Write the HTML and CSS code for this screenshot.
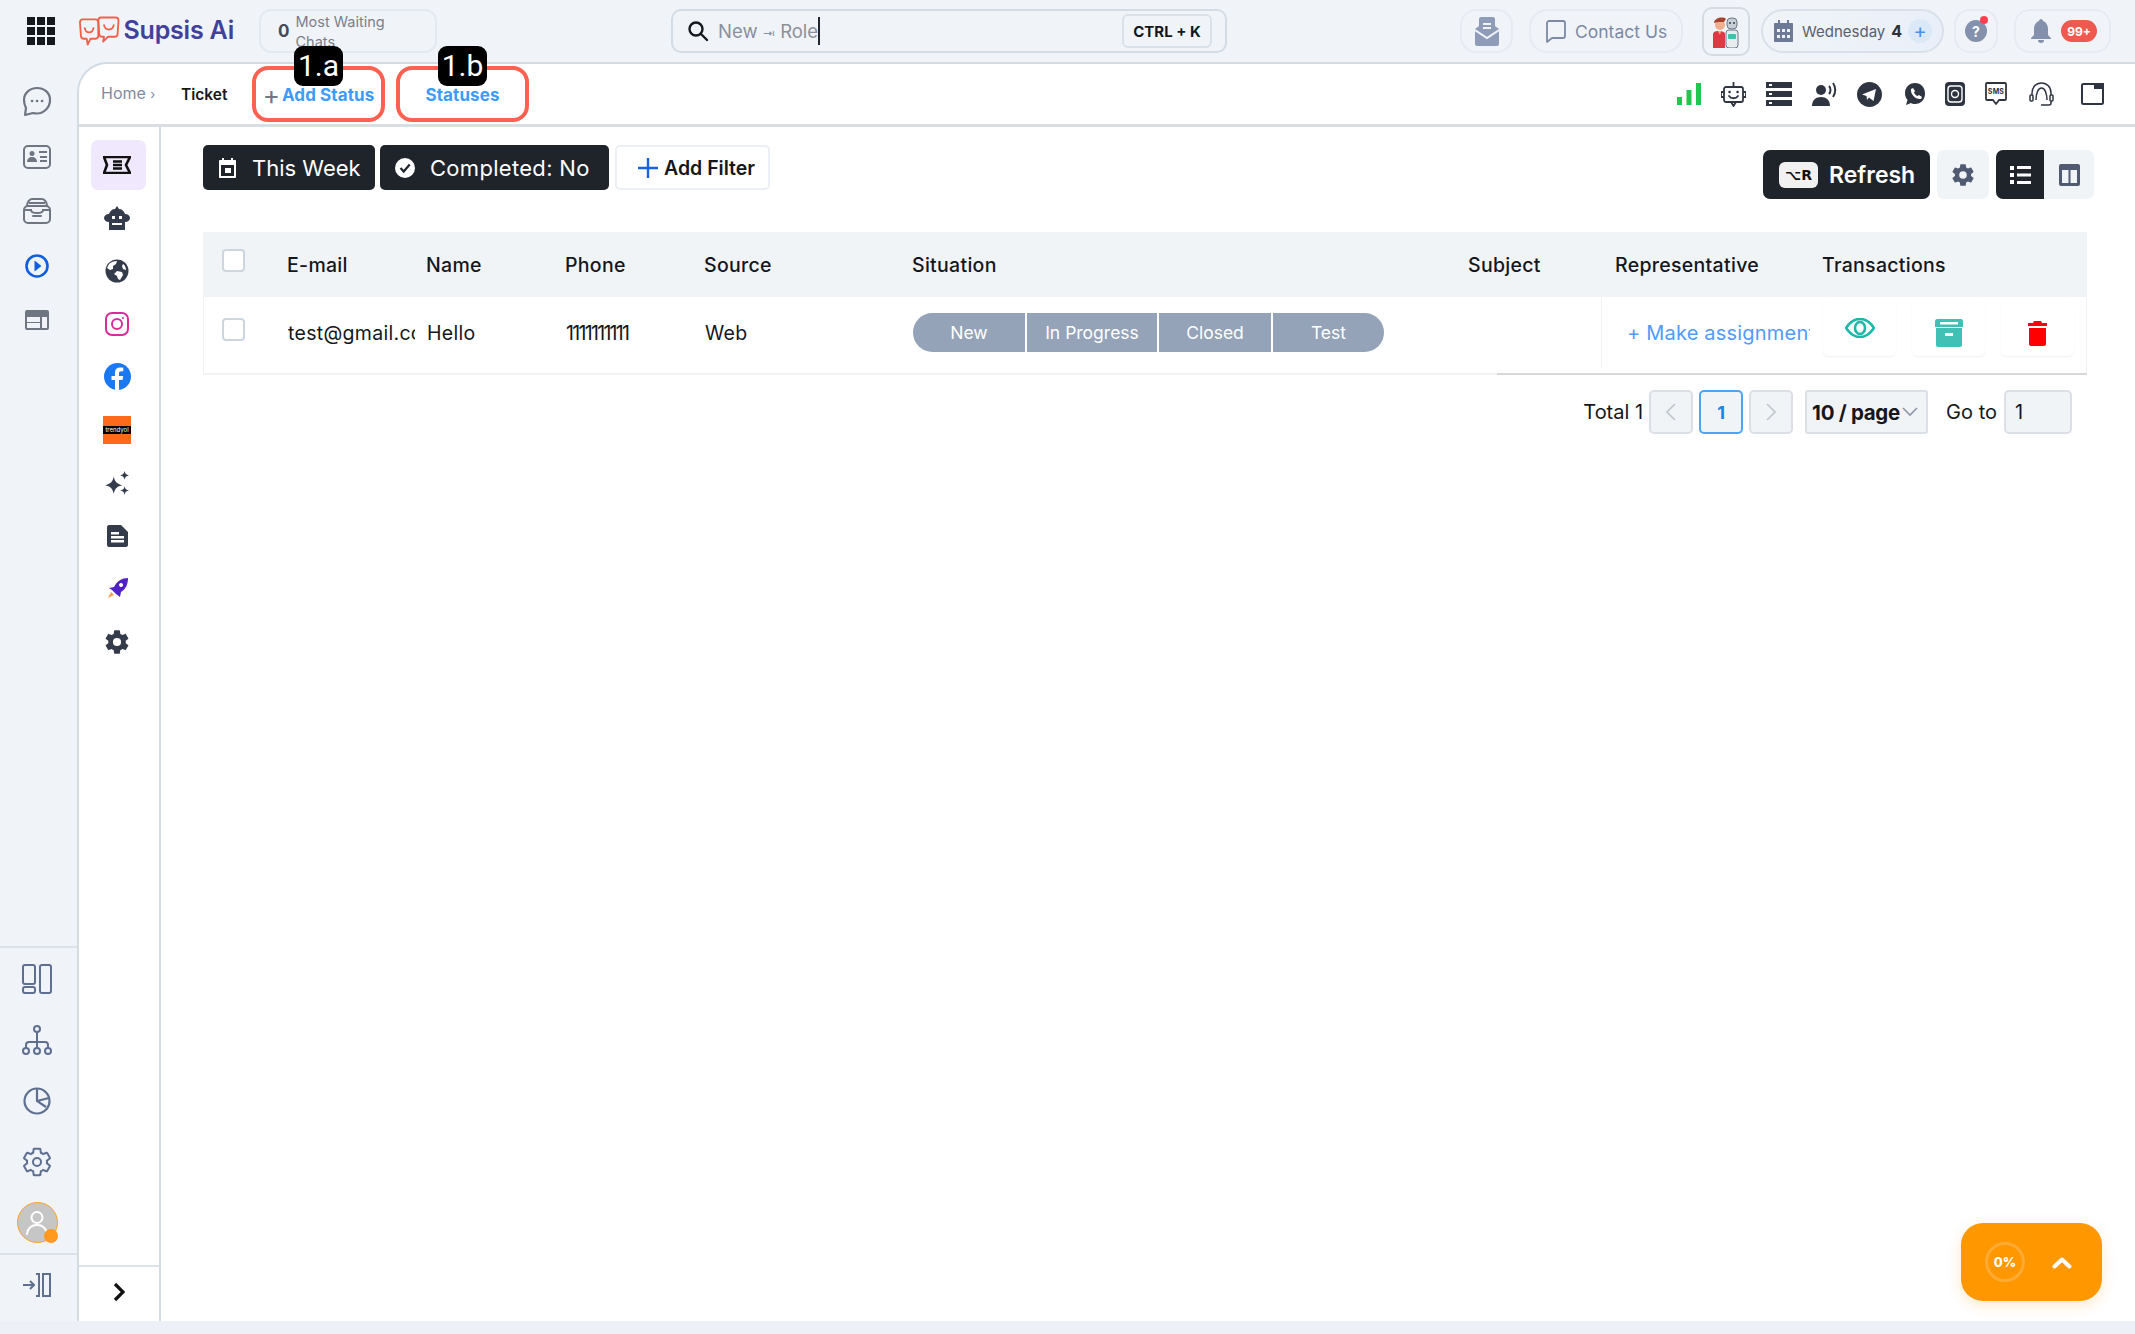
FILE: index.html
```html
<!DOCTYPE html>
<html lang="en">
<head>
<meta charset="utf-8">
<title>Supsis Ai - Ticket</title>
<link rel="stylesheet" href="styles.css">
</head>
<body>
<header class="topbar">
  <div class="apps"><i></i><i></i><i></i><i></i><i></i><i></i><i></i><i></i><i></i></div>
  <div class="logo">
    <svg width="42" height="30" viewBox="0 0 42 30" fill="none" stroke="#f0604a" stroke-width="1.900" stroke-linecap="round" stroke-linejoin="round"><path d="M4 3h13c2 0 3 1 3 3v14c0 2-1 3-3 3h-5l-3 6-1-6H5c-2 0-3-1-3-3L1 6c0-2 1-3 3-3z"/><path d="M23 1h15c2 0 3 1 3 3l-1 14c0 2-1 3-3 3h-7l-5 5 1-5h-2c-2 0-3-1-3-3L20 4c0-2 1-3 3-3z"/><path d="M6 12c1 6 8 6 9 0M26 9c1 6 9 6 10 0"/></svg>
    <span class="logo-name">Supsis Ai</span>
  </div>
  <div class="waiting"><b>0</b><span>Most Waiting Chats</span></div>
  <div class="search">
    <svg width="22" height="22" viewBox="0 0 22 22" fill="none" stroke="#15181d" stroke-width="2.400" stroke-linecap="round"><circle cx="9" cy="9" r="6.500"/><path d="M14 14l6 6"/></svg>
    <span class="search-text">New <small>⇥</small> Role</span><span class="caret"></span>
    <kbd class="shortcut">CTRL + K</kbd>
  </div>
  <div class="tbtn mailbtn">
    <svg width="24" height="29" viewBox="0 0 24 29"><path fill="#8e9cb7" d="M6 0h12c1 0 2 1 2 2v7l4 3v15c0 1-1 2-2 2H2c-1 0-2-1-2-2V12l4-3V2c0-1 1-2 2-2z"/><path fill="none" stroke="#f0f4f8" stroke-width="2" d="M0 13l12 8 12-8M8 7h8M8 11h8"/></svg>
  </div>
  <div class="tbtn contact">
    <svg width="20" height="23" viewBox="0 0 20 23" fill="none" stroke="#7c8aa5" stroke-width="1.800" stroke-linejoin="round"><path d="M1 3c0-1 1-2 2-2h14c1 0 2 1 2 2v13c0 1-1 2-2 2H6l-5 4z"/></svg>
    <span>Contact Us</span>
  </div>
  <div class="tbtn robotbtn">
    <svg width="26" height="34" viewBox="0 0 26 34"><circle cx="7" cy="11" r="5" fill="#eeb08e"/><path fill="#a5432f" d="M1 9c0-5 9-7 12-4l-2 3-6 0z"/><path fill="#de3a45" d="M0 20c1-3 3-3 6-3s6 1 6 3v14H0z"/><path fill="#eeb08e" d="M5 17h3l-1 4z"/><rect x="14" y="4" width="10" height="11" rx="4" fill="#c8ced6" stroke="#6b7785"/><circle cx="17" cy="9" r="1" fill="#30404f"/><circle cx="21" cy="9" r="1" fill="#30404f"/><rect x="13" y="16" width="12" height="18" rx="3" fill="#e8ecef" stroke="#6b7785"/><rect x="15" y="20" width="8" height="5" rx="1" fill="#3fc0a8"/></svg>
  </div>
  <div class="tbtn datebtn">
    <svg width="19" height="22" viewBox="0 0 19 22"><path fill="#6c7a96" d="M1 3h3V0h2v3h7V0h2v3h3c.6 0 1 .4 1 1v17c0 .6-.4 1-1 1H1c-.6 0-1-.4-1-1V4c0-.6.4-1 1-1z"/><path fill="#eef2f8" d="M3 9h3v3H3zM8 9h3v3H8zM13 9h3v3h-3zM3 15h3v3H3zM8 15h3v3H8zM13 15h3v3h-3z"/></svg>
    <span class="day">Wednesday</span><b class="daynum">4</b><span class="dayadd">+</span>
  </div>
  <div class="tbtn helpbtn"><span class="help">?</span><i class="dot"></i></div>
  <div class="tbtn bellbtn">
    <svg width="20" height="24" viewBox="0 0 20 24"><path fill="#8391ad" d="M10 0c1 0 2 1 2 2 3 1 5 4 5 8v6l3 3v1H0v-1l3-3v-6c0-4 2-7 5-8 0-1 1-2 2-2zM7 21h6c0 2-1 3-3 3s-3-1-3-3z"/></svg>
    <span class="count">99+</span>
  </div>
</header>

<div class="layout">
  <nav class="rail">
    <div class="rail-group">
      <a class="rail-top"><svg width="30" height="32" viewBox="0 0 30 32" fill="none" stroke="#6f7681" stroke-width="2.200" stroke-linejoin="round"><path d="M15 2C8 2 2 7 2 14c0 4 1 6 2 8l-1 7 8-2c1 .3 3 .5 4 .5 7 0 13-6 13-13.500S22 2 15 2z"/><path stroke-linecap="round" stroke-width="2.600" d="M10 15h.1M15 15h.1M20 15h.1"/></svg></a>
      <a class="rail-top"><svg width="28" height="24" viewBox="0 0 28 24"><rect x="1" y="1" width="26" height="22" rx="4" fill="none" stroke="#6f7681" stroke-width="2"/><circle cx="9" cy="8.500" r="2.500" fill="#6f7681"/><path fill="#6f7681" d="M4 17c0-3 2-5 5-5s5 2 5 5z"/><path stroke="#6f7681" stroke-width="2" d="M16 7h8M17 12h7M17 16h7"/></svg></a>
      <a class="rail-top"><svg width="28" height="26" viewBox="0 0 28 26" fill="none" stroke="#6f7681" stroke-width="2"><rect x="1" y="8" width="26" height="17" rx="4"/><path d="M4 8c0-3 2-7 5-7h10c3 0 5 4 5 7M6 5h16M1 12h7c0 3 3 3 6 3s6 0 6-3h7"/><path stroke-linecap="round" d="M10 18h8"/></svg></a>
      <a class="rail-top"><svg width="24" height="24" viewBox="0 0 24 24"><circle cx="12" cy="12" r="10.500" fill="none" stroke="#0f5ee0" stroke-width="2.600"/><path fill="#0f5ee0" d="M9.500 6.500l7 5.500-7 5.500z"/></svg></a>
      <a class="rail-top"><svg width="24" height="20" viewBox="0 0 24 20"><rect width="24" height="20" rx="2" fill="#6f7681"/><path fill="#f0f4f8" d="M2 7h13v5H2zM2 13h13v5H2zM17 7h5v11h-5z"/></svg></a>
    </div>
    <div class="rail-group rail-lower">
      <a class="rail-bottom"><svg width="30" height="30" viewBox="0 0 30 30" fill="none" stroke="#5f6f90" stroke-width="2"><rect x="1" y="1" width="12" height="19" rx="2"/><rect x="1" y="23" width="12" height="6" rx="2"/><rect x="18" y="1" width="11" height="28" rx="2"/></svg></a>
      <a class="rail-bottom"><svg width="30" height="30" viewBox="0 0 30 30" fill="none" stroke="#5f6f90" stroke-width="2"><circle cx="15" cy="4" r="3"/><circle cx="4" cy="26" r="3"/><circle cx="15" cy="26" r="3"/><circle cx="26" cy="26" r="3"/><path d="M15 7v16M4 23v-3c0-2 1-3 3-3h16c2 0 3 1 3 3v3"/></svg></a>
      <a class="rail-bottom"><svg width="28" height="28" viewBox="0 0 28 28" fill="none" stroke="#5f6f90" stroke-width="2.200"><circle cx="14" cy="14" r="12.500"/><path d="M14 2v12l9 6M14 14l12-3"/></svg></a>
      <a class="rail-bottom"><svg width="32" height="32" viewBox="0 0 24 24" fill="none" stroke="#5f6f90" stroke-width="1.500"><circle cx="12" cy="12" r="3"/><path d="M19.430 12.970c.04-.32.070-.64.070-.97s-.03-.66-.07-1l2.110-1.630c.19-.15.240-.42.120-.64l-2-3.460c-.12-.22-.39-.31-.61-.22l-2.490 1c-.52-.39-1.060-.73-1.690-.98l-.37-2.650A.5.500 0 0 0 14 2h-4a.5.500 0 0 0-.5.420l-.37 2.650c-.63.25-1.170.59-1.690.98l-2.490-1c-.22-.09-.49 0-.61.22l-2 3.460c-.13.22-.07.49.12.64L4.570 11c-.04.34-.07.67-.07 1s.03.65.07.97l-2.110 1.660c-.19.15-.25.42-.12.64l2 3.460c.12.22.39.3.61.22l2.490-1.010c.52.4 1.060.74 1.690.99l.37 2.650c.04.24.25.42.5.42h4c.25 0 .46-.18.5-.42l.37-2.650c.63-.26 1.170-.59 1.690-.99l2.490 1.010c.22.08.49 0 .61-.22l2-3.460c.12-.22.07-.49-.12-.64z"/></svg></a>
      <a class="rail-bottom"><span class="avatar"><svg width="24" height="26" viewBox="0 0 24 26" fill="none" stroke="#fff" stroke-width="2" stroke-linecap="round"><circle cx="12" cy="7.500" r="5.500"/><path d="M2 24c1-6 5-9 10-9s9 3 10 9"/></svg><i></i></span></a>
    </div>
    <a class="rail-exit"><svg width="28" height="24" viewBox="0 0 28 24" fill="none" stroke="#5f6f90" stroke-width="2"><path d="M0 12h10M7 8l4 4-4 4M13 1h3v22h-3M20 1h7v22h-7z"/></svg></a>
  </nav>

  <main class="panel">
    <div class="subbar">
      <span class="crumb">Home <small>›</small></span>
      <span class="crumb-now">Ticket</span>
      <div class="mark mark-a"><span class="tag">1.a</span><span class="link"><em>+</em>Add Status</span></div>
      <div class="mark mark-b"><span class="tag">1.b</span><span class="link">Statuses</span></div>
      <div class="channels">
        <svg width="24" height="22" viewBox="0 0 24 22" fill="#1cc84e"><rect y="14" width="5" height="8"/><rect x="9.500" y="7" width="5" height="15"/><rect x="19" width="5" height="22"/></svg>
        <svg width="25" height="26" viewBox="0 0 25 26" fill="none" stroke="#2f3540" stroke-width="1.800"><rect x="3" y="6" width="19" height="15" rx="2"/><path d="M12.500 1v5M3 11H0v5h3M22 11h3v5h-3M10 21l2.500 4 2.500-4"/><path d="M8 15c2 3 7 3 9 0" stroke-linecap="round"/><path stroke-linecap="round" stroke-width="2.500" d="M8.500 11h.1M16.500 11h.1"/></svg>
        <svg width="26" height="24" viewBox="0 0 26 24"><path fill="#2f3540" d="M0 0h26v6H0zM0 9h26v6H0zM0 18h26v6H0z"/><path fill="#fff" d="M3 2h3v2H3zM3 11h3v2H3zM3 20h3v2H3z"/></svg>
        <svg width="25" height="24" viewBox="0 0 25 24"><circle cx="9" cy="8" r="5" fill="#2f3540"/><path fill="#2f3540" d="M0 24c0-6 4-9 9-9s9 3 9 9z"/><path fill="none" stroke="#2f3540" stroke-width="2" d="M17 4c2 2 2 6 0 8M21 1c3 4 3 10 0 14"/></svg>
        <svg width="25" height="25" viewBox="0 0 25 25"><circle cx="12.500" cy="12.500" r="12.500" fill="#2f3540"/><path fill="#fff" d="M5 12.500L19 7l-2.500 12-4.500-3.500-2 2.500-.5-4z"/></svg>
        <svg class="ch-wa" width="20" height="22" viewBox="0 0 20 22"><path fill="#2f3540" d="M10 0c6 0 10 4.500 10 10.500S16 21 10 21c-2 0-3-.4-4-1l-5 2 1.500-5C1 15 0 13 0 10.500 0 4.500 4 0 10 0z"/><path fill="#fff" d="M6 6l2-1 2 3-1 1.500c.5 1.500 2 3 3.500 3.500l1.500-1 3 2-1 2c-5 1-11-5-10-10z"/></svg>
        <svg width="20" height="24" viewBox="0 0 20 24"><rect width="20" height="24" rx="4" fill="#2f3540"/><rect x="3" y="4" width="14" height="16" rx="3" fill="none" stroke="#fff" stroke-width="1.400"/><circle cx="10" cy="12" r="3.500" fill="none" stroke="#fff" stroke-width="1.400"/></svg>
        <div class="sms"><svg width="22" height="24" viewBox="0 0 22 24" fill="none" stroke="#2f3540" stroke-width="1.800" stroke-linejoin="round"><path d="M2 1h18c.6 0 1 .4 1 1v15c0 .6-.4 1-1 1h-6l-3 4-3-4H2c-.6 0-1-.4-1-1V2c0-.6.4-1 1-1z"/></svg><span>SMS</span></div>
        <svg class="ch-head" width="25" height="26" viewBox="0 0 25 26" fill="none" stroke="#2f3540" stroke-width="1.500"><path d="M3 14v-2C3 6 7 2 12.500 2S22 6 22 12v2"/><path d="M7 19c0-6 2-12 5.500-12S18 13 18 19"/><rect x="1" y="14" width="3" height="6" rx="1"/><rect x="21" y="14" width="3" height="6" rx="1"/><path d="M22 20v2c0 1-1 2-2 2h-8"/></svg>
        <svg class="ch-win" width="23" height="22" viewBox="0 0 23 22"><rect x="1" y="1" width="21" height="20" rx="1.500" fill="none" stroke="#2f3540" stroke-width="2"/><path fill="#2f3540" d="M13 0h10v6H13z"/></svg>
      </div>
    </div>

    <div class="body-row">
      <aside class="side">
        <div class="side-list">
          <a class="side-item active"><svg width="28" height="18" viewBox="0 0 28 18" fill="none" stroke="#111" stroke-width="2.600"><path d="M1 1h26l-4 8 4 8H1l3-8z"/><path d="M10 5.500h9M10 9h9M10 12.500h9"/></svg></a>
          <a class="side-item"><svg width="26" height="24" viewBox="0 0 26 24"><path fill="#343b4a" d="M13 0l2 3c3 0 5 2 6 5 3 0 5 2 5 4s-2 4-5 4v8H5v-8c-3 0-5-2-5-4s2-4 5-4c1-3 3-5 6-5z"/><path fill="#fff" d="M8 10h3v3H8zM15 10h3v3h-3zM8 17h10v2H8z"/></svg></a>
          <a class="side-item"><svg width="24" height="24" viewBox="0 0 24 24"><circle cx="12" cy="12" r="11.500" fill="#343b4a"/><path fill="#fff" d="M4 5c2-2 5-3 8-3l-1 3-3 2v3l-3 1-3-2zM12 12l5 1 1 3-3 5-2-1-1-3-3-2zM18 5c2 1 3 4 3 6l-3-1-1-3z"/></svg></a>
          <a class="side-item"><svg width="24" height="24" viewBox="0 0 24 24" fill="none" stroke="#dd2a9b" stroke-width="2"><rect x="1" y="1" width="22" height="22" rx="6"/><circle cx="12" cy="12" r="5"/><circle cx="18" cy="6" r="1" fill="#dd2a9b" stroke="none"/></svg></a>
          <a class="side-item"><svg width="27" height="27" viewBox="0 0 27 27"><circle cx="13.500" cy="13.500" r="13.500" fill="#1a78f2"/><path fill="#fff" d="M15 27V17h3.500l.7-4H15v-2.500c0-1.300.6-2.200 2.300-2.200h2V4.800C18.500 4.700 17.400 4.500 16 4.500c-3 0-5 1.800-5 5V13H7.500v4H11v10z"/></svg></a>
          <a class="side-item"><span class="trendyol"><span>trendyol</span></span></a>
          <a class="side-item"><svg width="26" height="26" viewBox="1 0 24 24" fill="#343b4a"><path d="M10 6c1 5 3 7 8 8-5 1-7 3-8 8-1-5-3-7-8-8 5-1 7-3 8-8zM20 1c.5 2.500 1.500 3.500 4 4-2.500.5-3.500 1.500-4 4-.5-2.500-1.500-3.500-4-4 2.500-.5 3.500-1.500 4-4zM20 15c.5 2.500 1.500 3.500 4 4-2.500.5-3.500 1.500-4 4-.5-2.500-1.500-3.500-4-4 2.500-.5 3.500-1.500 4-4z"/></svg></a>
          <a class="side-item"><svg width="21" height="22" viewBox="0 0 21 22"><path fill="#343b4a" d="M2 0h12l7 7v13c0 1-1 2-2 2H2c-1 0-2-1-2-2V2C0 1 1 0 2 0z"/><path fill="#fff" d="M4 7h8v2.500H4zM4 11h13v2.500H4zM4 15h13v2.500H4z"/></svg></a>
          <a class="side-item"><svg width="21" height="21" viewBox="0 0 21 21"><path fill="#5021c9" d="M21 0c0 6-2 11-7 14l-1 5-4-3-4-4-3-2 5-1C10 3 15 0 21 0z"/><path fill="#fff" d="M14 5a2 2 0 1 0 .1 0z"/><path fill="#ff9b50" d="M4 14l3 3-6 3z"/></svg></a>
          <a class="side-item"><svg width="28" height="28" viewBox="0 0 24 24" fill="#343b4a"><path d="M12,15.5A3.5,3.5 0 0,1 8.5,12A3.5,3.5 0 0,1 12,8.5A3.5,3.5 0 0,1 15.5,12A3.5,3.5 0 0,1 12,15.5M19.43,12.97C19.47,12.65 19.5,12.33 19.5,12C19.5,11.67 19.47,11.34 19.43,11L21.54,9.37C21.73,9.22 21.78,8.95 21.66,8.73L19.66,5.27C19.54,5.05 19.27,4.96 19.05,5.05L16.56,6.05C16.04,5.66 15.5,5.32 14.87,5.07L14.5,2.42C14.46,2.18 14.25,2 14,2H10C9.75,2 9.54,2.18 9.5,2.42L9.13,5.07C8.5,5.32 7.96,5.66 7.44,6.05L4.95,5.05C4.73,4.96 4.46,5.05 4.34,5.27L2.34,8.73C2.21,8.95 2.27,9.22 2.46,9.37L4.57,11C4.53,11.34 4.5,11.67 4.5,12C4.5,12.33 4.53,12.65 4.57,12.97L2.46,14.63C2.27,14.78 2.21,15.05 2.34,15.27L4.34,18.73C4.46,18.95 4.73,19.03 4.95,18.95L7.44,17.94C7.96,18.34 8.5,18.68 9.13,18.93L9.5,21.58C9.54,21.82 9.75,22 10,22H14C14.25,22 14.46,21.82 14.5,21.58L14.87,18.93C15.5,18.67 16.04,18.34 16.56,17.94L19.05,18.95C19.27,19.03 19.54,18.95 19.66,18.73L21.66,15.27C21.78,15.05 21.73,14.78 21.54,14.63L19.43,12.97Z"/></svg></a>
        </div>
        <div class="side-foot"><svg width="12" height="20" viewBox="0 0 12 20" fill="none" stroke="#111" stroke-width="3.200"><path d="M2 2l8 8-8 8"/></svg></div>
      </aside>

      <section class="content">
        <div class="toolbar">
          <div class="filters">
            <span class="chip chip-week"><svg width="17" height="20" viewBox="0 0 17 20"><path fill="#fff" d="M1 2h2V0h2v2h7V0h2v2h2c.6 0 1 .4 1 1v16c0 .6-.4 1-1 1H1c-.6 0-1-.4-1-1V3c0-.6.4-1 1-1z"/><path fill="#1f242b" d="M2 7h13v11H2z"/><path fill="#fff" d="M6 10h6v5H6z"/></svg>This Week</span>
            <span class="chip chip-done"><svg width="20" height="20" viewBox="0 0 20 20"><circle cx="10" cy="10" r="10" fill="#fff"/><path fill="none" stroke="#1f242b" stroke-width="2.200" d="M5.500 10l3.200 3.500 6-7"/></svg>Completed: No</span>
            <span class="addfilter"><svg width="20" height="20" viewBox="0 0 20 20" stroke="#1463e6" stroke-width="2.400"><path d="M10 0v20M0 10h20"/></svg>Add Filter</span>
          </div>
          <div class="actions">
            <span class="refresh"><kbd>⌥R</kbd>Refresh</span>
            <span class="iconbtn"><svg width="26" height="26" viewBox="0 0 24 24" fill="#505a70"><path d="M12,15.5A3.5,3.5 0 0,1 8.5,12A3.5,3.5 0 0,1 12,8.5A3.5,3.5 0 0,1 15.5,12A3.5,3.5 0 0,1 12,15.5M19.43,12.97C19.47,12.65 19.5,12.33 19.5,12C19.5,11.67 19.47,11.34 19.43,11L21.54,9.37C21.73,9.22 21.78,8.95 21.66,8.73L19.66,5.27C19.54,5.05 19.27,4.96 19.05,5.05L16.56,6.05C16.04,5.66 15.5,5.32 14.87,5.07L14.5,2.42C14.46,2.18 14.25,2 14,2H10C9.75,2 9.54,2.18 9.5,2.42L9.13,5.07C8.5,5.32 7.96,5.66 7.44,6.05L4.95,5.05C4.73,4.96 4.46,5.05 4.34,5.27L2.34,8.73C2.21,8.95 2.27,9.22 2.46,9.37L4.57,11C4.53,11.34 4.5,11.67 4.5,12C4.5,12.33 4.53,12.65 4.57,12.97L2.46,14.63C2.27,14.78 2.21,15.05 2.34,15.27L4.34,18.73C4.46,18.95 4.73,19.03 4.95,18.95L7.44,17.94C7.96,18.34 8.5,18.68 9.13,18.93L9.5,21.58C9.54,21.82 9.75,22 10,22H14C14.25,22 14.46,21.82 14.5,21.58L14.87,18.93C15.5,18.67 16.04,18.34 16.56,17.94L19.05,18.95C19.27,19.03 19.54,18.95 19.66,18.73L21.66,15.27C21.78,15.05 21.73,14.78 21.54,14.63L19.43,12.97Z"/></svg></span>
            <div class="toggle">
              <span class="tog tog-on"><svg width="21" height="18" viewBox="0 0 21 18" fill="#fff"><path d="M0 0h4v4H0zM7 0h14v3H7zM0 7h4v4H0zM7 7.500h14v3H7zM0 14h4v4H0zM7 15h14v3H7z"/></svg></span>
              <span class="tog tog-off"><svg width="21" height="22" viewBox="0 0 21 22"><rect width="21" height="22" rx="2" fill="#505a70"/><path fill="#f1f4f7" d="M3 6h6.500v13H3zM11.500 6H18v13h-6.500z"/></svg></span>
            </div>
          </div>
        </div>

        <div class="table">
          <div class="thead">
            <div class="cell cbx cbx-head"><span class="check"></span></div>
            <div class="cell">E-mail</div>
            <div class="cell">Name</div>
            <div class="cell">Phone</div>
            <div class="cell">Source</div>
            <div class="cell">Situation</div>
            <div class="cell">Subject</div>
            <div class="cell cell-rep-h">Representative</div>
            <div class="cell">Transactions</div>
          </div>
          <div class="trow">
            <div class="cell cbx"><span class="check"></span></div>
            <div class="cell clip">test@gmail.com</div>
            <div class="cell">Hello</div>
            <div class="cell phone">1111111111</div>
            <div class="cell">Web</div>
            <div class="cell"><div class="steps"><span class="step">New</span><span class="step">In Progress</span><span class="step">Closed</span><span class="step">Test</span></div></div>
            <div class="cell"></div>
            <div class="cell cell-rep"><span class="assign">+ Make assignment</span></div>
            <div class="cell cell-acts">
              <span class="act"><svg class="i-eye" width="30" height="20" viewBox="0 0 30 20" fill="none" stroke="#19b8a8" stroke-width="2.600"><path d="M1 10C5 4 10 1 15 1s10 3 14 9c-4 6-9 9-14 9S5 16 1 10z"/><ellipse cx="15" cy="10" rx="5" ry="6"/></svg></span>
              <span class="act"><svg class="i-box" width="28" height="28" viewBox="0 0 28 28"><path fill="#41c0b6" d="M0 2c0-1 1-2 2-2h24c1 0 2 1 2 2v6H0z"/><rect x="5" y="3" width="18" height="2.500" fill="#fff"/><path fill="#41c0b6" d="M1 9h26v17c0 1-1 2-2 2H3c-1 0-2-1-2-2z"/><rect x="10" y="14" width="8" height="3" fill="#fff"/></svg></span>
              <span class="act"><svg class="i-trash" width="19" height="25" viewBox="0 0 19 25" fill="#fe0000"><path d="M6 0h7l1 2h5v3H0V2h5zM1 7h17v16c0 1-1 2-2 2H3c-1 0-2-1-2-2z"/></svg></span>
            </div>
          </div>
          <div class="scrolltrack"></div>
        </div>

        <div class="pager">
          <span class="total">Total 1</span>
          <span class="pg"><svg width="10" height="18" viewBox="0 0 10 18" fill="none" stroke="#c0c4cc" stroke-width="1.600"><path d="M9 1L1 9l8 8"/></svg></span>
          <span class="pg pg-on">1</span>
          <span class="pg"><svg width="10" height="18" viewBox="0 0 10 18" fill="none" stroke="#c0c4cc" stroke-width="1.600"><path d="M1 1l8 8-8 8"/></svg></span>
          <span class="size"><b>10 / page</b><svg width="16" height="10" viewBox="0 0 16 10" fill="none" stroke="#8d96a5" stroke-width="1.600"><path d="M1 1l7 7 7-7"/></svg></span>
          <span class="goto">Go to</span>
          <span class="goinput">1</span>
        </div>
      </section>
    </div>
  </main>
</div>
<div class="strip"></div>

<div class="fab">
  <span class="ring">0%</span>
  <svg width="20" height="13" viewBox="0 0 20 13" fill="none" stroke="#fff" stroke-width="4" stroke-linecap="round" stroke-linejoin="round"><path d="M2.500 10.500L10 3.500l7.500 7"/></svg>
</div>
</body>
</html>
```

FILE: styles.css
```css
* { box-sizing: border-box; }
html, body { margin: 0; height: 100%; }
body {
  position: relative;
  display: flex;
  flex-direction: column;
  height: 1334px;
  overflow: hidden;
  background: #f0f4f8;
  color: #14171c;
  font-family: Inter, "Liberation Sans", sans-serif;
}
a { display: flex; }
small { font-size: inherit; }
kbd { font-family: inherit; }

/* top bar */
.topbar { display: flex; align-items: center; height: 62px; flex: none; padding-left: 27px; }
.apps { display: grid; grid-template-columns: repeat(3, 8px); gap: 2px; }
.apps i { width: 8px; height: 8px; background: #16191e; }
.logo { display: flex; align-items: center; width: 155px; margin-left: 24px; gap: 4px; }
.logo-name { font-size: 25px; font-weight: 600; color: #41409c; white-space: nowrap; letter-spacing: -.2px; padding-bottom: 3px; }
.waiting { display: flex; align-items: center; width: 178px; height: 44px; margin-left: 25px; padding: 0 10px 0 17px; border: 2px solid #e4e9ef; border-radius: 12px; }
.waiting b { font-size: 17px; font-weight: 700; color: #444b58; margin-right: 6px; }
.waiting span { font-size: 14.500px; line-height: 20px; color: #7a808b; padding-top: 1px; }
.search { display: flex; align-items: center; width: 556px; height: 44px; margin-left: 234px; padding: 0 13px 0 14px; border: 2px solid #d3dbe4; border-radius: 10px; }
.search-text { margin-left: 9px; font-size: 18.500px; color: #8b909c; white-space: nowrap; }
.search-text small { font-size: 12px; }
.caret { width: 2px; height: 28px; background: #22262c; }
.shortcut { margin-left: auto; display: flex; align-items: center; justify-content: center; width: 90px; height: 34px; border: 2px solid #dbe1e8; border-radius: 6px; font-size: 15px; font-weight: 700; color: #14171c; }
.tbtn { display: flex; align-items: center; height: 44px; border: 2px solid #e7ebf1; border-radius: 16px; flex: none; }
.mailbtn { width: 53px; margin-left: 233px; justify-content: center; }
.contact { width: 154px; margin-left: 16px; padding-left: 15px; gap: 9px; color: #7c8aa5; font-size: 17.500px; border-radius: 18px; white-space: nowrap; }
.robotbtn { width: 48px; height: 49px; margin-left: 19px; justify-content: center; border-color: #d6dbe2; border-radius: 10px; }
.datebtn { width: 183px; margin-left: 11px; padding-left: 11px; border-color: #d9e0ea; border-radius: 24px; background: linear-gradient(90deg, #f0f4f8, #e9eff9); }
.day { margin-left: 9px; font-size: 15px; color: #58606e; }
.daynum { margin-left: 6px; font-size: 16px; font-weight: 700; color: #2a2f38; }
.dayadd { display: flex; align-items: center; justify-content: center; width: 24px; height: 24px; margin-left: 6px; border-radius: 50%; background: #dbe8f8; color: #4b8fe6; font-size: 20px; }
.helpbtn { position: relative; width: 44px; margin-left: 10px; justify-content: center; }
.help { display: flex; align-items: center; justify-content: center; width: 22px; height: 22px; border-radius: 50%; background: #8391ad; color: #fff; font-size: 14px; font-weight: 700; }
.dot { position: absolute; top: 5px; right: 8px; width: 8px; height: 8px; border-radius: 50%; background: #ff3f4f; }
.bellbtn { width: 97px; margin-left: 16px; padding-left: 15px; gap: 10px; }
.count { display: flex; align-items: center; justify-content: center; width: 36px; height: 22px; border-radius: 11px; background: #ee5a50; color: #fff; font-size: 12px; font-weight: 700; }

/* shell */
.layout { display: flex; flex: 1; min-height: 0; }
.strip { height: 13px; flex: none; background: #edf0f7; }
.rail { display: flex; flex-direction: column; width: 77px; flex: none; padding: 13px 3px 0 0; }
.rail-group { display: flex; flex-direction: column; }
.rail-lower { margin: auto -3px 0 0; padding-right: 3px; border-top: 2px solid #dde2e8; border-bottom: 2px solid #dde2e8; }
.rail-top { height: 54.500px; align-items: center; justify-content: center; }
.rail-bottom { height: 61px; align-items: center; justify-content: center; }
.rail-exit { height: 66px; padding-bottom: 6px; align-items: center; justify-content: center; }
.avatar { position: relative; display: flex; align-items: center; justify-content: center; width: 41px; height: 41px; border-radius: 50%; border: 1px solid #f5a623; background: #c6c6c6; }
.avatar i { position: absolute; right: -1px; bottom: -1px; width: 14px; height: 14px; border-radius: 50%; background: #ff9a1f; }

.panel { display: flex; flex-direction: column; flex: 1; min-width: 0; background: #fff; border-top: 2px solid #d3dbe4; border-left: 2px solid #d3dbe4; border-top-left-radius: 30px; }
.subbar { display: flex; align-items: center; height: 63px; flex: none; padding: 0 31px 0 22px; border-bottom: 3px solid #d8dee4; }
.crumb { font-size: 16px; color: #7f8ba3; width: 80px; white-space: nowrap; padding-bottom: 2px; }
.crumb small { font-size: 13px; }
.crumb-now { font-size: 15.500px; font-weight: 600; color: #14171c; width: 71px; }
.mark { position: relative; display: flex; align-items: center; justify-content: center; width: 133px; height: 56px; flex: none; border: 4px solid #fe6151; border-radius: 16px; }
.mark-b { margin-left: 11px; }
.tag { position: absolute; top: -24px; left: 38px; display: flex; align-items: center; justify-content: center; width: 49px; height: 40px; border-radius: 9px; background: #000; color: #fff; font-family: Roboto, sans-serif; font-size: 30px; line-height: 1; }
.link { display: flex; align-items: center; font-size: 17px; font-weight: 700; letter-spacing: .1px; color: #3d9bfb; white-space: nowrap; padding-top: 2px; }
.link em { font-style: normal; font-weight: 400; font-size: 26px; line-height: 1; color: #707682; margin-right: 2px; }
.channels { display: flex; align-items: center; gap: 20px; margin-left: auto; }
.ch-wa { margin-left: 3px; }
.ch-head { margin-left: 2px; }
.ch-win { margin-left: 7px; }
.sms { position: relative; display: flex; }
.sms span { position: absolute; top: 5px; left: 0; width: 22px; text-align: center; font-size: 7px; font-weight: 700; letter-spacing: .2px; color: #2f3540; }

.body-row { display: flex; flex: 1; min-height: 0; }
.side { display: flex; flex-direction: column; width: 82px; flex: none; border-right: 2px solid #d3dbe4; }
.side-list { flex: 1; padding: 13px 0 0 12px; }
.side-item { align-items: center; justify-content: center; width: 55px; height: 53px; padding-right: 3px; }
.side-item.active { height: 50px; margin-bottom: 1px; border-radius: 7px; background: #f0e9fd; }
.trendyol { display: flex; align-items: center; justify-content: center; width: 28px; height: 28px; background: #fd6a1c; }
.trendyol span { width: 100%; background: #000; color: #fff; font-size: 6px; line-height: 8px; text-align: center; overflow: hidden; }
.side-foot { display: flex; align-items: center; justify-content: center; height: 56px; flex: none; padding-bottom: 5px; border-top: 2px solid #dde2e8; }

.content { flex: 1; min-width: 0; padding: 18px 48px 0 42px; }
.toolbar { display: flex; justify-content: space-between; height: 87px; margin-right: -7px; }
.filters { display: flex; gap: 5px; height: 45px; }
.chip { display: flex; align-items: center; height: 45px; border-radius: 5px; background: #1f242b; color: #fff; font-size: 22px; white-space: nowrap; }
.chip-week { width: 172px; padding-left: 16px; gap: 16px; }
.chip-done { width: 229px; padding-left: 15px; gap: 15px; letter-spacing: .3px; }
.addfilter { display: flex; align-items: center; width: 155px; margin-left: 1px; padding-left: 21px; gap: 6px; height: 45px; border: 2px solid #eceff3; border-radius: 5px; font-size: 19.500px; font-weight: 600; white-space: nowrap; }
.actions { display: flex; margin-top: 5px; height: 49px; }
.refresh { display: flex; align-items: center; width: 167px; padding-left: 16px; gap: 11px; border-radius: 7px; background: #1f242b; color: #fff; font-size: 23px; font-weight: 600; }
.refresh kbd { display: flex; align-items: center; justify-content: center; width: 39px; height: 26px; border-radius: 6px; background: #f1f1f1; color: #111; font-size: 14px; font-weight: 700; font-family: "DejaVu Sans", sans-serif; }
.iconbtn { display: flex; align-items: center; justify-content: center; width: 52px; margin-left: 7px; border-radius: 7px; background: #f1f4f7; }
.toggle { display: flex; margin-left: 7px; }
.tog { display: flex; align-items: center; justify-content: center; }
.tog-on { width: 48px; background: #1f242b; border-radius: 7px 0 0 7px; }
.tog-off { width: 50px; background: #f1f4f7; border-radius: 0 7px 7px 0; }

/* table */
.table { font-size: 19.500px; letter-spacing: .3px; }
.thead, .trow { display: grid; grid-template-columns: 84px 139px 139px 139px 208px 556px 132px 222px 1fr; align-items: center; }
.thead { height: 65px; background: #f1f4f7; font-weight: 500; }
.trow { height: 76px; padding-bottom: 5px; border-left: 1px solid #f0f2f5; border-right: 1px solid #f0f2f5; }
.cell { min-width: 0; white-space: nowrap; }
.cbx { padding-left: 19px; display: flex; }
.cbx-head { padding-bottom: 8px; }
.trow .cbx { padding-bottom: 6px; padding-left: 18px; }
.check { display: block; width: 23px; height: 23px; border: 2px solid #cdd5e0; border-radius: 4px; background: #fff; }
.clip { overflow: hidden; margin-right: 12px; }
.phone { letter-spacing: -1.700px; }
.steps { display: flex; gap: 2px; width: 471px; height: 39px; border-radius: 20px; overflow: hidden; letter-spacing: 0; }
.step { display: flex; align-items: center; justify-content: center; flex: 0 0 112px; background: #94a3b8; color: #fff; font-size: 17.500px; }
.step:nth-child(2) { flex-basis: 130px; }
.step:last-child { flex-basis: 111px; }
.cell-rep-h { padding-left: 15px; }
.cell-rep { align-self: stretch; display: flex; align-items: center; padding: 0 13px 0 25px; border-left: 1px solid #f0f2f5; }
.assign { display: block; overflow: hidden; color: #4f9bff; font-size: 20px; letter-spacing: .2px; }
.cell-acts { display: flex; gap: 16px; align-self: start; }
.act { display: flex; justify-content: center; width: 73px; height: 55px; margin-top: 4px; border-radius: 6px; box-shadow: 0 1px 2px rgba(0, 0, 0, .06); }
.i-eye { margin-top: 17px; }
.i-box { margin-top: 18px; }
.i-trash { margin-top: 20px; }
.scrolltrack { height: 2px; background: linear-gradient(90deg, #f0f2f5 1294px, #d9d9d9 1294px); }

/* pagination */
.pager { display: flex; align-items: center; justify-content: flex-end; height: 44px; margin-top: 15px; padding-right: 15px; font-size: 20px; }
.total { margin-right: 6px; white-space: nowrap; }
.pg { display: flex; align-items: center; justify-content: center; width: 44px; height: 44px; margin-right: 6px; border: 2px solid #dcdfe6; border-radius: 5px; background: #f1f4f7; }
.pg-on { border-color: #4da3f5; color: #1a85e8; font-weight: 700; font-size: 18px; }
.pg + .size { margin-left: 6px; }
.size { display: flex; align-items: center; gap: 2px; width: 123px; height: 44px; padding-left: 5px; border: 2px solid #dcdfe6; border-radius: 3px; background: #f1f4f7; }
.size b { font-size: 20.500px; font-weight: 700; white-space: nowrap; letter-spacing: -.3px; }
.goto { margin: 0 7px 0 18px; white-space: nowrap; }
.goinput { display: flex; align-items: center; width: 68px; height: 44px; padding-left: 9px; border: 2px solid #dcdfe6; border-radius: 5px; background: #f1f4f7; }

/* floating progress */
.fab { position: absolute; left: 1961px; top: 1223px; display: flex; align-items: center; width: 141px; height: 78px; padding-left: 24px; gap: 27px; border-radius: 22px; background: #ff9800; box-shadow: 0 4px 14px rgba(255, 152, 0, .22); }
.ring { display: flex; align-items: center; justify-content: center; width: 40px; height: 40px; border: 3px solid #ffaa33; border-radius: 50%; color: #fff; font-size: 13px; font-weight: 800; }
```
